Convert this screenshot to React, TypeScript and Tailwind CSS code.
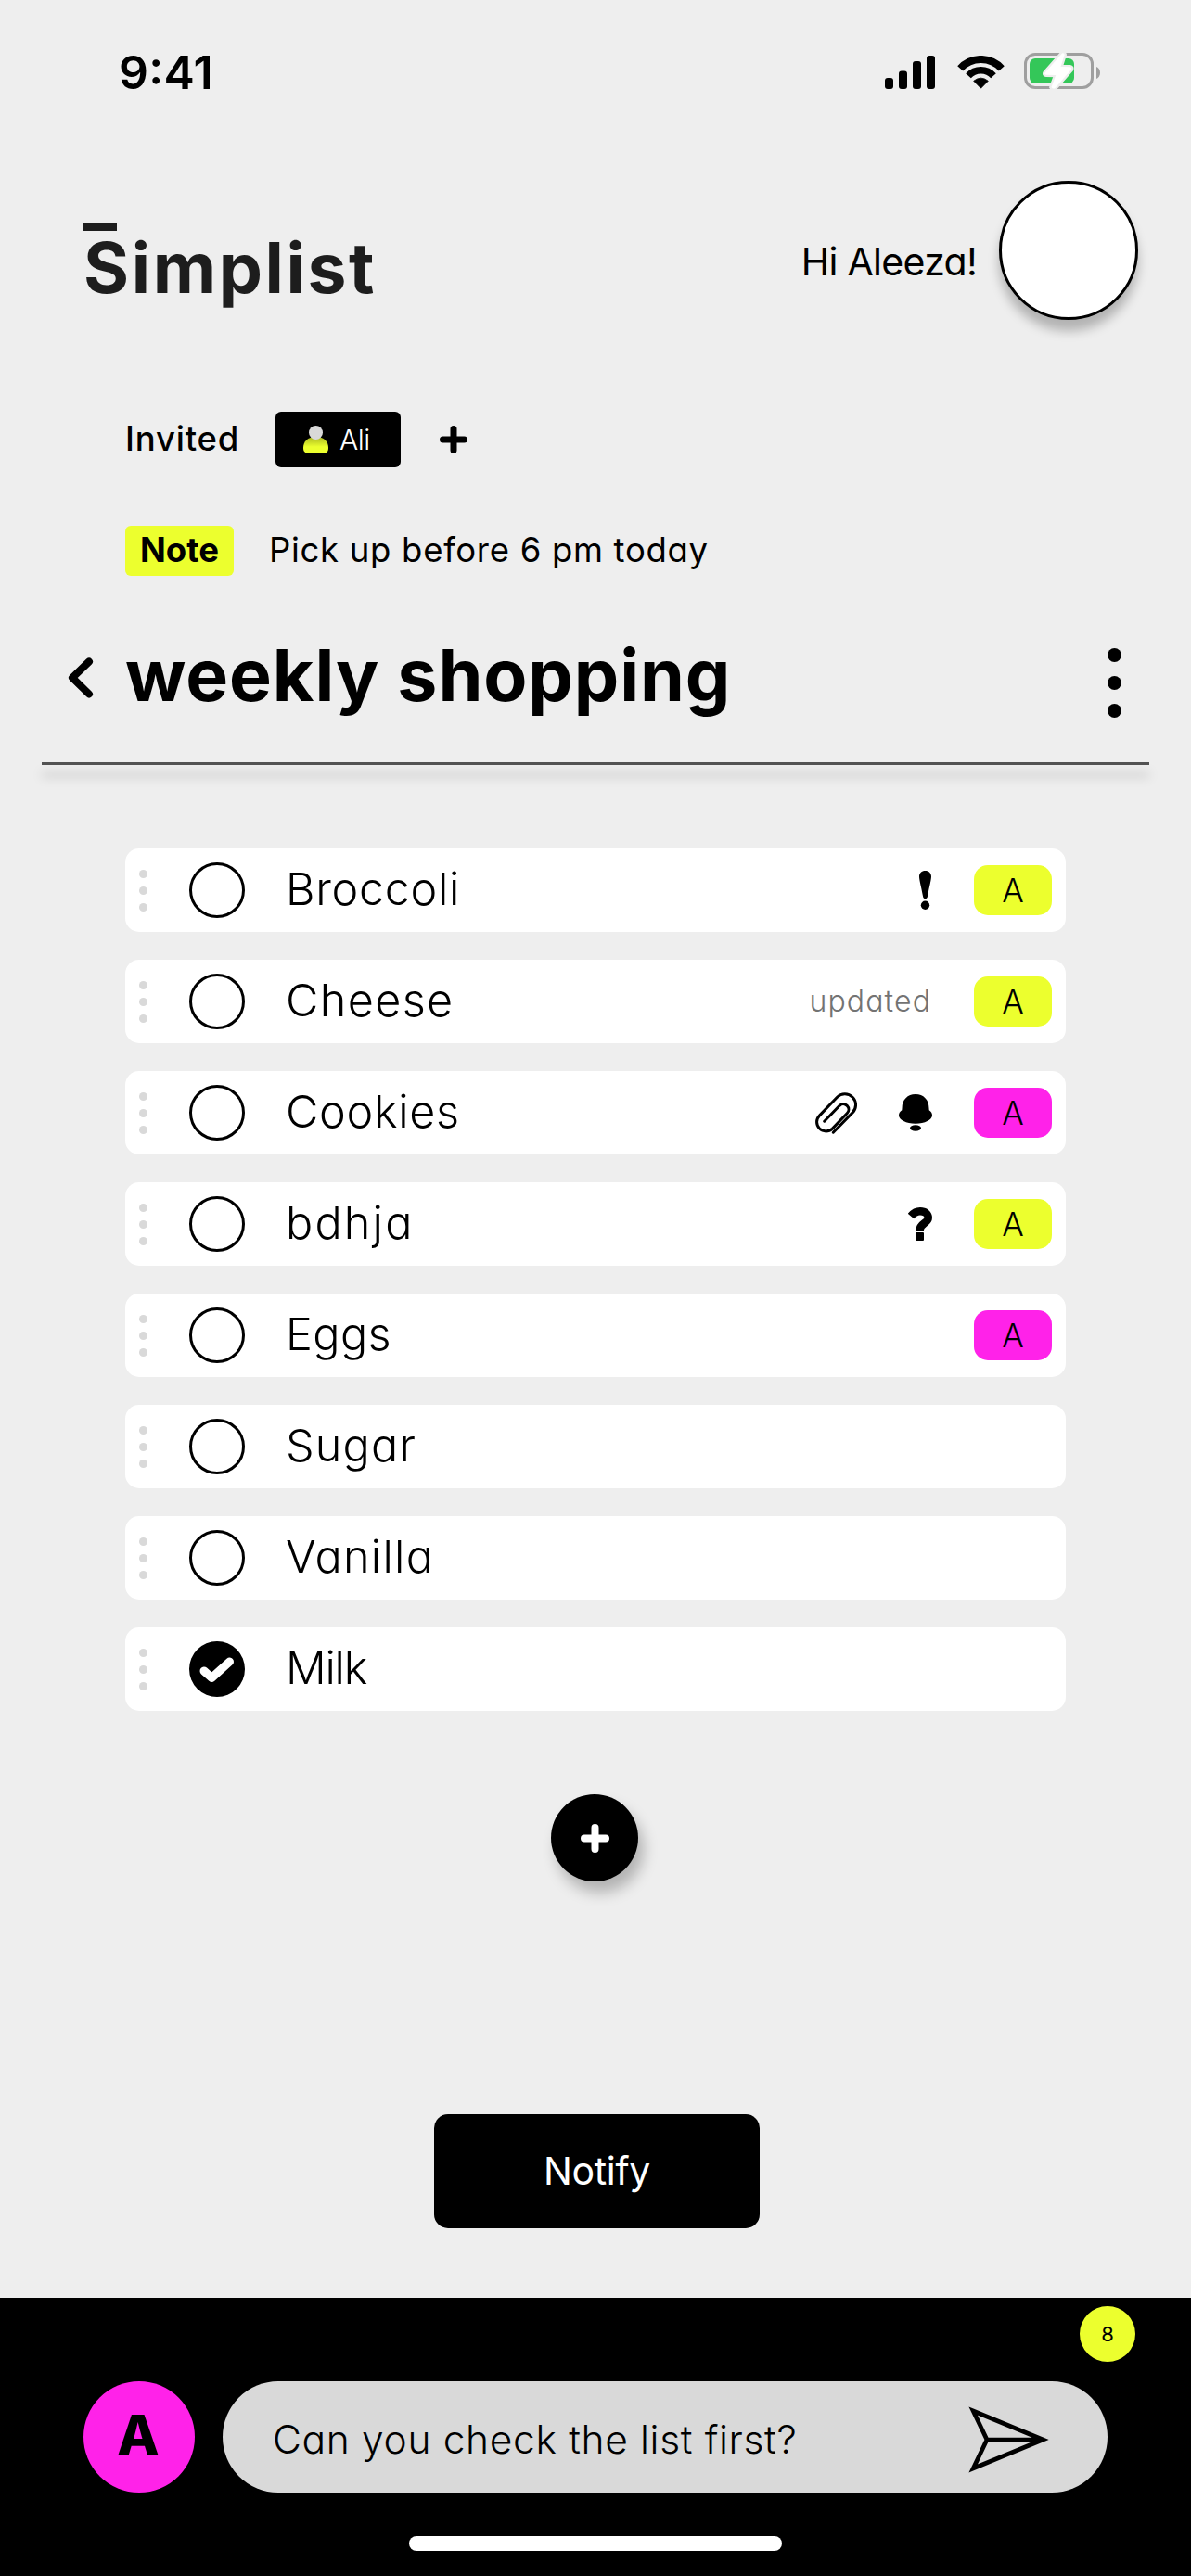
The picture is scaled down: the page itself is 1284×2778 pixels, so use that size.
import type { ReactNode } from "react";

type Item = {
  name: string;
  spacing: string;
  done?: boolean;
  extra?: ReactNode;
  tag?: "lime" | "pink";
};

const Exclamation = () => (
  <svg width="13" height="42" viewBox="0 0 13 42" className="mr-[1px]">
    <path d="M0 6.2 C0 2.6 2.6 0 6.5 0 C10.4 0 13 2.6 13 6.2 C13 10 9.8 22 9 27.4 C8.7 29.2 7.9 30 6.5 30 C5.1 30 4.3 29.2 4 27.4 C3.2 22 0 10 0 6.2Z" />
    <circle cx="6.5" cy="37.3" r="4.7" />
  </svg>
);

const Clip = () => (
  <svg width="45" height="45" viewBox="0 0 45 45" fill="none" stroke="#000" strokeWidth="3" strokeLinecap="round">
    <path d="M19.3 43.2 L40.1 21.9 A11.7 11.7 0 0 0 23.5 5.3 L4.4 25.1 A9.9 9.9 0 0 0 18.4 39.1 L34.3 22.5 A5.8 5.8 0 0 0 26.1 14.3 L9.7 31.2" />
  </svg>
);

const Bell = () => (
  <svg width="36" height="40" viewBox="0 0 36 40">
    <path d="M3.5 15 C3.5 6 9.5 0 18 0 C26.500 0 32.500 6 32.500 15 L32.700 17.200 C35 18.700 36 20.600 36 22.800 C36 27.800 28 31.700 18 31.700 C8 31.700 0 27.800 0 22.800 C0 20.600 1 18.700 3.300 17.200Z" />
    <ellipse cx="18" cy="36.500" rx="6" ry="3.200" />
  </svg>
);

const Question = () => (
  <svg width="26" height="36" viewBox="0 0 26 36">
    <path d="M3 9.600 C6.200 5.800 9.200 4.300 13 4.300 C18.300 4.300 21.700 7.100 21.700 11.300 C21.700 17.500 12.500 16.800 12.500 25.200" fill="none" stroke="#000" strokeWidth="8.600" />
    <rect x="8" y="27" width="9" height="9" rx="1" />
  </svg>
);

const items: Item[] = [
  { name: "Broccoli", spacing: "tracking-[0.7px]", tag: "lime", extra: <Exclamation /> },
  {
    name: "Cheese",
    spacing: "tracking-[1.4px]",
    tag: "lime",
    extra: <span className="mr-[1px] text-[32px] leading-none font-light tracking-[1.100px] text-[#737373]">updated</span>,
  },
  {
    name: "Cookies",
    spacing: "tracking-[0.7px]",
    tag: "pink",
    extra: (
      <>
        <Clip />
        <Bell />
      </>
    ),
  },
  { name: "bdhja", spacing: "tracking-[2.200px]", tag: "lime", extra: <Question /> },
  { name: "Eggs", spacing: "tracking-[0.4px]", tag: "pink" },
  { name: "Sugar", spacing: "tracking-[1.2px]" },
  { name: "Vanilla", spacing: "tracking-[1.3px]" },
  { name: "Milk", spacing: "tracking-[-1.2px]", done: true },
];

function Row({ item }: { item: Item }) {
  return (
    <li className="flex h-[90px] items-center rounded-[15px] bg-white px-[15px]">
      <div className="flex flex-col gap-[9px]">
        <span className="size-[9px] rounded-full bg-[#d9d9d9]" />
        <span className="size-[9px] rounded-full bg-[#d9d9d9]" />
        <span className="size-[9px] rounded-full bg-[#d9d9d9]" />
      </div>
      {item.done ? (
        <span className="ml-[45px] flex size-[60px] items-center justify-center rounded-full bg-black">
          <svg width="60" height="60" viewBox="0 0 60 60" fill="none" stroke="#fff" strokeWidth="9" strokeLinecap="round" strokeLinejoin="round">
            <path d="M16 32 L24.300 39.300 L43.500 22" />
          </svg>
        </span>
      ) : (
        <span className="ml-[45px] size-[60px] rounded-full border-[3px] border-black" />
      )}
      <span className={`ml-[44px] pb-[2px] text-[48.5px] leading-none font-light ${item.spacing}`}>{item.name}</span>
      <div className="ml-auto flex items-center gap-[45px]">
        {item.extra}
        {item.tag && (
          <span
            className={`flex h-[54px] w-[84px] items-center justify-center rounded-[15px] text-[35px] leading-none font-light ${
              item.tag === "lime" ? "bg-[#ecff2e]" : "bg-[#ff22e9]"
            }`}
          >
            A
          </span>
        )}
      </div>
    </li>
  );
}

function StatusBar() {
  return (
    <div className="flex h-[156px] items-center justify-between pr-[98px] pl-[128px]">
      <span className="text-[50px] leading-none font-semibold tracking-[0.3px]">9:41</span>
      <div className="flex items-center">
        <svg width="54" height="36" viewBox="0 0 54 36">
          <rect x="0" y="24" width="9" height="12" rx="3" />
          <rect x="15" y="16.500" width="9" height="19.500" rx="3" />
          <rect x="30" y="6" width="9" height="30" rx="3" />
          <rect x="45" y="0" width="9" height="36" rx="3" />
        </svg>
        <svg className="ml-6" width="51" height="36" viewBox="0 0 51 36">
          <path d="M3.200 13.900 A30 30 0 0 1 47.800 13.900" fill="none" stroke="#000" strokeWidth="8" />
          <path d="M12 21.800 A18.200 18.200 0 0 1 39 21.800" fill="none" stroke="#000" strokeWidth="7.600" />
          <path d="M17.700 27.300 Q25.500 21 33.300 27.300 L25.500 35.200Z" stroke="#000" strokeWidth="0.800" strokeLinejoin="round" />
        </svg>
        <svg className="mb-[3px] ml-[21px]" width="82" height="39" viewBox="0 0 82 39">
          <rect x="1.500" y="1.500" width="72" height="36" rx="10.500" fill="none" stroke="#9f9f9f" strokeWidth="3" />
          <path d="M78 15 C80.600 16 82 18.600 82 21.500 C82 24.400 80.600 27 78 28Z" fill="#9f9f9f" />
          <rect x="6" y="6" width="48" height="27" rx="6" fill="#34c759" />
          <path
            d="M41 0.500 L22.500 21.500 Q21.500 23.500 24 23.800 L34.300 24 L29.500 37 Q31 39.500 33.500 38 L51 18 Q52 15.700 49.500 15.300 L39.500 15 L43.700 2 Q43 -0.500 41 0.500Z"
            fill="#fff"
            stroke="#eee"
            strokeWidth="4.500"
            paintOrder="stroke"
          />
        </svg>
      </div>
    </div>
  );
}

export default function App() {
  return (
    <div className="flex h-[2778px] w-[1284px] flex-col overflow-hidden bg-[#eee] font-['Inter',sans-serif] text-black [font-feature-settings:'cv11','calt']">
      <StatusBar />

      <header className="mt-[39px] flex h-[150px] justify-between pr-[57px] pl-[90px]">
        <div className="pt-[45px] text-[#1d1d1d]">
          <div className="h-[9px] w-9 bg-[#1d1d1d]" />
          <h1 className="text-[75px] leading-[79px] font-bold tracking-[2.600px]">Simplist</h1>
        </div>
        <div className="flex items-center gap-[24px]">
          <span className="pt-6 text-[41px] leading-none tracking-[-0.700px]">Hi Aleeza!</span>
          <div className="size-[150px] rounded-full border-[3px] border-black bg-white shadow-[0_12px_12px_rgba(0,0,0,0.25)]" />
        </div>
      </header>

      <section className="mt-[99px] flex h-[60px] items-center pl-[135px]">
        <span className="w-[162px] pb-[2px] text-[36.5px] leading-none font-medium tracking-[0.800px]">Invited</span>
        <div className="flex h-[60px] w-[135px] items-center rounded-md bg-black pl-[30px]">
          <svg width="27" height="30" viewBox="0 0 27 30">
            <defs>
              <linearGradient id="body" x1="0" y1="0" x2="0" y2="1">
                <stop offset="0.100" stopColor="#b3c123" />
                <stop offset="0.600" stopColor="#ecff2e" />
              </linearGradient>
            </defs>
            <path d="M0 24 C0 17 4.500 12 13.500 12 C22.500 12 27 17 27 24 C27 28 25 30 20 30 L7 30 C2 30 0 28 0 24Z" fill="url(#body)" />
            <circle cx="13.500" cy="7.500" r="7.500" fill="#d9d9d9" />
          </svg>
          <span className="ml-[12px] text-[30px] leading-none font-light tracking-[-0.500px] text-white">Ali</span>
        </div>
        <svg className="ml-[42px]" width="30" height="30" viewBox="0 0 30 30" stroke="#000" strokeWidth="7" strokeLinecap="round">
          <path d="M15 3.500 V26.500 M3.500 15 H26.500" />
        </svg>
      </section>

      <section className="mt-[63px] flex h-[54px] items-center pl-[135px]">
        <span className="flex h-[54px] w-[117px] items-center justify-center rounded-md bg-[#ecff2e] pb-[1px] text-[36.5px] leading-none font-bold">
          Note
        </span>
        <span className="ml-[38px] pb-[2px] text-[36.5px] leading-none tracking-[0.700px]">Pick up before 6 pm today</span>
      </section>

      <section className="mt-[78px] flex h-[75px] pr-[75px] pl-[73px]">
        <svg className="mt-[10px]" width="28" height="44" viewBox="0 0 28 44" fill="none" stroke="#000" strokeWidth="8" strokeLinecap="round" strokeLinejoin="round">
          <path d="M23 4.500 L5 21.800 L23 39.500" />
        </svg>
        <h2 className="ml-[34px] text-[77px] leading-[59px] font-bold tracking-[0.900px] whitespace-nowrap">weekly shopping</h2>
        <div className="ml-auto flex flex-col gap-[15px]">
          <span className="size-[15px] rounded-full bg-black" />
          <span className="size-[15px] rounded-full bg-black" />
          <span className="size-[15px] rounded-full bg-black" />
        </div>
      </section>

      <div className="mx-[45px] mt-12 h-[3px] shrink-0 bg-[#525252] shadow-[0_12px_12px_rgba(0,0,0,0.25)]" />

      <ul className="mt-[90px] mr-[135px] ml-[135px] flex flex-col gap-[30px]">
        {items.map((item) => (
          <Row key={item.name} item={item} />
        ))}
      </ul>

      <button className="mt-[90px] ml-[594px] flex size-[94px] items-center justify-center rounded-full bg-black shadow-[6px_12px_15px_rgba(0,0,0,0.25)]">
        <svg width="31" height="31" viewBox="0 0 31 31" stroke="#fff" strokeWidth="8" strokeLinecap="round">
          <path d="M15.500 4 V27 M4 15.500 H27" />
        </svg>
      </button>

      <button className="mt-[251px] ml-[468px] flex h-[123px] w-[351px] items-center justify-center rounded-[15px] bg-black text-[41px] leading-none font-normal tracking-[-0.300px] text-white">
        Notify
      </button>

      <footer className="mt-[75px] h-[300px] bg-black pt-[9px]">
        <span className="mr-[60px] ml-auto flex size-[60px] items-center justify-center rounded-full bg-[#ecff2e] text-[22px] leading-none">
          8
        </span>
        <div className="mt-[21px] flex gap-[30px] pr-[90px] pl-[90px]">
          <span className="flex size-[120px] items-center justify-center rounded-full bg-[#ff22e9] pr-[2px] pb-[6px] text-[59px] leading-none font-extrabold">A</span>
          <div className="flex flex-1 items-center justify-between rounded-full bg-[#d9d9d9] pr-[63px] pl-[54px]">
            <span className="pt-[7px] text-[42.5px] leading-none font-light tracking-[0.650px]">Can you check the list first?</span>
            <svg className="mt-[6px]" width="87" height="72" viewBox="0 0 87 72" fill="none" stroke="#000" strokeWidth="4.700" strokeMiterlimit="10">
              <path d="M5.200 5 L80.500 36 L5.200 67 L20 36Z M20 36 H80" />
            </svg>
          </div>
        </div>
        <div className="mx-auto mt-[47px] h-4 w-[402px] rounded-full bg-white" />
      </footer>
    </div>
  );
}
